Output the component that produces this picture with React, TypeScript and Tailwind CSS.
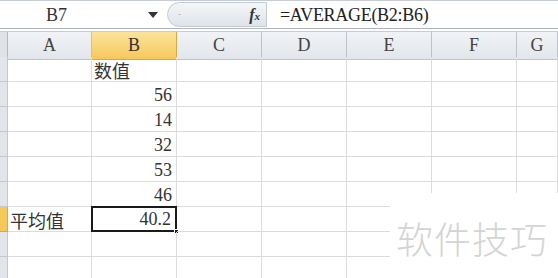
import React from "react";

const cols = ["A", "B", "C", "D", "E", "F", "G"];

type Cell = { text?: string; right?: boolean; cjk?: boolean };

const rows: Cell[][] = [
  [{}, { text: "数值", cjk: true }],
  [{}, { text: "56", right: true }],
  [{}, { text: "14", right: true }],
  [{}, { text: "32", right: true }],
  [{}, { text: "53", right: true }],
  [{}, { text: "46", right: true }],
  [{ text: "平均值", cjk: true }, { text: "40.2", right: true }],
  [],
  [],
];

export default function App() {
  return (
    <div className="relative w-[558px] h-[278px] overflow-hidden bg-white text-[#222] font-['Liberation_Serif']">
      {/* formula bar */}
      <div className="flex h-[29px] border-t border-[#c6ccd4] border-b border-b-[#aab3bf] bg-white">
        <div className="flex w-[167px] items-center">
          <div className="flex-1 pl-[46px] text-[18px] leading-none text-[#333] font-['Liberation_Serif']">B7</div>
          <svg width="12" height="8" viewBox="0 0 12 8" className="mr-[8px]">
            <path d="M1 1h10L6 7z" fill="#333" />
          </svg>
        </div>
        <div className="flex w-[100px] my-[1px] items-center justify-between rounded-l-full bg-gradient-to-b from-[#f4f6f9] to-[#dfe3e8] border border-[#c4cad2] pl-[10px] pr-[6px]">
          <span className="text-[9px] leading-none text-[#aab]">-</span>
          <span className="text-[16px] italic font-bold leading-none text-[#333] font-['Liberation_Serif']">
            f<span className="text-[11px]">x</span>
          </span>
        </div>
        <div className="flex flex-1 items-center pl-[13px] text-[18px] leading-none tracking-[-0.3px] text-[#222] font-['Liberation_Serif']">
          =AVERAGE(B2:B6)
        </div>
      </div>

      {/* column headers */}
      <div className="mt-[2px] grid grid-cols-[8px_84px_85px_85px_85px_85px_85px_1fr] h-[26px] border-t border-[#c6ccd4]">
        <div className="bg-[#dfe3e8] border-r border-b border-[#b5bcc6]" />
        {cols.map((c) => (
          <div
            key={c}
            className={
              "flex items-center justify-center border-r border-b text-[18px] font-['Liberation_Serif'] " +
              (c === "B"
                ? "bg-gradient-to-b from-[#fbe49a] to-[#f6c85a] border-[#d9a93c] text-[#333]"
                : "bg-gradient-to-b from-[#f1f3f6] to-[#e2e6eb] border-[#bcc3cc] text-[#444]")
            }
          >
            {c}
          </div>
        ))}
      </div>

      {/* rows */}
      {rows.map((r, i) => (
        <div key={i} className="grid grid-cols-[8px_84px_85px_85px_85px_85px_85px_1fr] h-[25px]">
          <div
            className={
              "border-r border-b " +
              (i === 6 ? "bg-[#f6c85a] border-[#d9a93c]" : "bg-[#e2e6eb] border-[#c2c8d0]")
            }
          />
          {cols.map((c, j) => {
            const cell = r[j] || {};
            const selected = i === 6 && j === 1;
            return (
              <div
                key={c}
                className={
                  "relative flex items-end pb-[1px] leading-[20px] text-[#333] " +
                  (cell.cjk ? "font-['Noto_Sans_CJK_SC'] text-[18px] " : "font-['Liberation_Serif'] text-[18px] ") +
                  (cell.right ? "justify-end pr-[4px] " : "pl-[2px] ") +
                  (selected
                    ? "border-2 border-[#1a1a1a] -ml-[1px] -mt-[1px]"
                    : "border-r border-b border-[#dadcdd]")
                }
              >
                {cell.text}
                {selected && (
                  <span className="absolute -right-[4px] -bottom-[4px] w-[5px] h-[5px] bg-[#1a1a1a] border border-white" />
                )}
              </div>
            );
          })}
        </div>
      ))}

      {/* watermark */}
      <div className="absolute left-[390px] top-[193px] w-[168px] h-[85px] bg-white flex items-center pl-[6px] pt-[6px]">
        <span className="text-[37px] leading-none text-[#d4d4d4] tracking-[1px] font-['Noto_Sans_CJK_SC'] font-light">
          软件技巧
        </span>
      </div>
    </div>
  );
}
